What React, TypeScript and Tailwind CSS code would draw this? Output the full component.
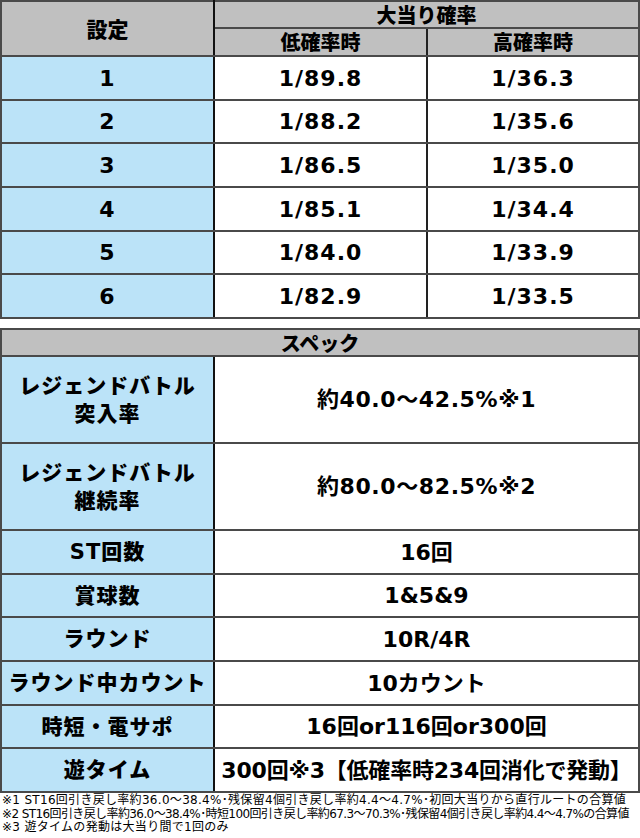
import React from "react";

const font = { fontFamily: '"DejaVu Sans", "Noto Sans CJK JP", sans-serif' };
const jp = { fontFamily: '"Noto Sans CJK JP", sans-serif' };

const rates = [
  ["1", "1/89.8", "1/36.3", "h-[44px]"],
  ["2", "1/88.2", "1/35.6", "h-[43px]"],
  ["3", "1/86.5", "1/35.0", "h-[44px]"],
  ["4", "1/85.1", "1/34.4", "h-[44px]"],
  ["5", "1/84.0", "1/33.9", "h-[43px]"],
  ["6", "1/82.9", "1/33.5", "h-[44px]"],
];

const specs: { label: React.ReactNode; value: string; h: string; track?: string }[] = [
  { label: (<><div>レジェンドバトル</div><div>突入率</div></>), value: "約40.0～42.5%※1", h: "h-[87px]", track: "tracking-[0.6px]" },
  { label: (<><div>レジェンドバトル</div><div>継続率</div></>), value: "約80.0～82.5%※2", h: "h-[87px]", track: "tracking-[0.6px]" },
  { label: "ST回数", value: "16回", h: "h-[44px]" },
  { label: "賞球数", value: "1&5&9", h: "h-[43px]" },
  { label: "ラウンド", value: "10R/4R", h: "h-[44px]" },
  { label: "ラウンド中カウント", value: "10カウント", h: "h-[44px]" },
  { label: "時短・電サポ", value: "16回or116回or300回", h: "h-[43px]" },
  { label: "遊タイム", value: "300回※3【低確率時234回消化で発動】", h: "h-[44px]", track: "tracking-[-0.2px]" },
];

const bd = "border-2 border-[#4a4a4a]";

export default function App() {
  return (
    <div className="w-[640px] h-[838px] bg-white text-black font-bold overflow-hidden" style={font}>
      <table className="w-[640px] table-fixed border-collapse">
        <colgroup>
          <col className="w-[213px]" />
          <col className="w-[213px]" />
          <col />
        </colgroup>
        <tbody>
          <tr className="h-[27px]">
            <td rowSpan={2} className={`bg-[#c0c0c0] ${bd} border-r-[#111] text-center text-[21px] font-black`} style={jp}>設定</td>
            <td colSpan={2} className={`bg-[#c0c0c0] ${bd} text-center text-[20px] leading-[22px] font-black`} style={jp}>大当り確率</td>
          </tr>
          <tr className="h-[28px]">
            <td className={`bg-[#c0c0c0] ${bd} border-r-[#222] text-center text-[20px] leading-[22px] font-black`} style={jp}>低確率時</td>
            <td className={`bg-[#c0c0c0] ${bd} text-center text-[20px] leading-[22px] font-black`} style={jp}>高確率時</td>
          </tr>
          {rates.map((r) => (
            <tr key={r[0]} className={r[3]}>
              <td className={`bg-[#bbe3f8] ${bd} border-r-[#111] text-center text-[22px] tracking-[1px]`}>{r[0]}</td>
              <td className={`bg-white ${bd} border-r-[#222] text-center text-[22px] tracking-[1px]`}>{r[1]}</td>
              <td className={`bg-white ${bd} text-center text-[22px] tracking-[1px]`}>{r[2]}</td>
            </tr>
          ))}
        </tbody>
      </table>
      <div className="h-[9px]" />
      <table className="w-[640px] table-fixed border-collapse">
        <colgroup>
          <col className="w-[213px]" />
          <col />
        </colgroup>
        <tbody>
          <tr className="h-[27px]">
            <td colSpan={2} className={`bg-[#c0c0c0] ${bd} text-center text-[20px] leading-[22px] font-black`} style={jp}>スペック</td>
          </tr>
          {specs.map((s, i) => (
            <tr key={i} className={s.h}>
              <td className={`bg-[#bbe3f8] ${bd} border-r-[#111] text-center text-[21px] leading-[28px] tracking-[1px] whitespace-nowrap font-black`}>{s.label}</td>
              <td className={`bg-white ${bd} text-center text-[22px] whitespace-nowrap ${s.track ?? ""}`}>{s.value}</td>
            </tr>
          ))}
        </tbody>
      </table>
      <div className="pt-[1px] pl-[2px] text-[12px] leading-[13.5px] font-normal whitespace-nowrap">
        <div className="tracking-[0.3px]">※1 ST16回引き戻し率約36.0～38.4%･残保留4個引き戻し率約4.4～4.7%･初回大当りから直行ルートの合算値</div>
        <div className="tracking-[-0.6px]">※2 ST16回引き戻し率約36.0～38.4%･時短100回引き戻し率約67.3～70.3%･残保留4個引き戻し率約4.4～4.7%の合算値</div>
        <div className="tracking-[0.3px]">※3 遊タイムの発動は大当り間で1回のみ</div>
      </div>
    </div>
  );
}
